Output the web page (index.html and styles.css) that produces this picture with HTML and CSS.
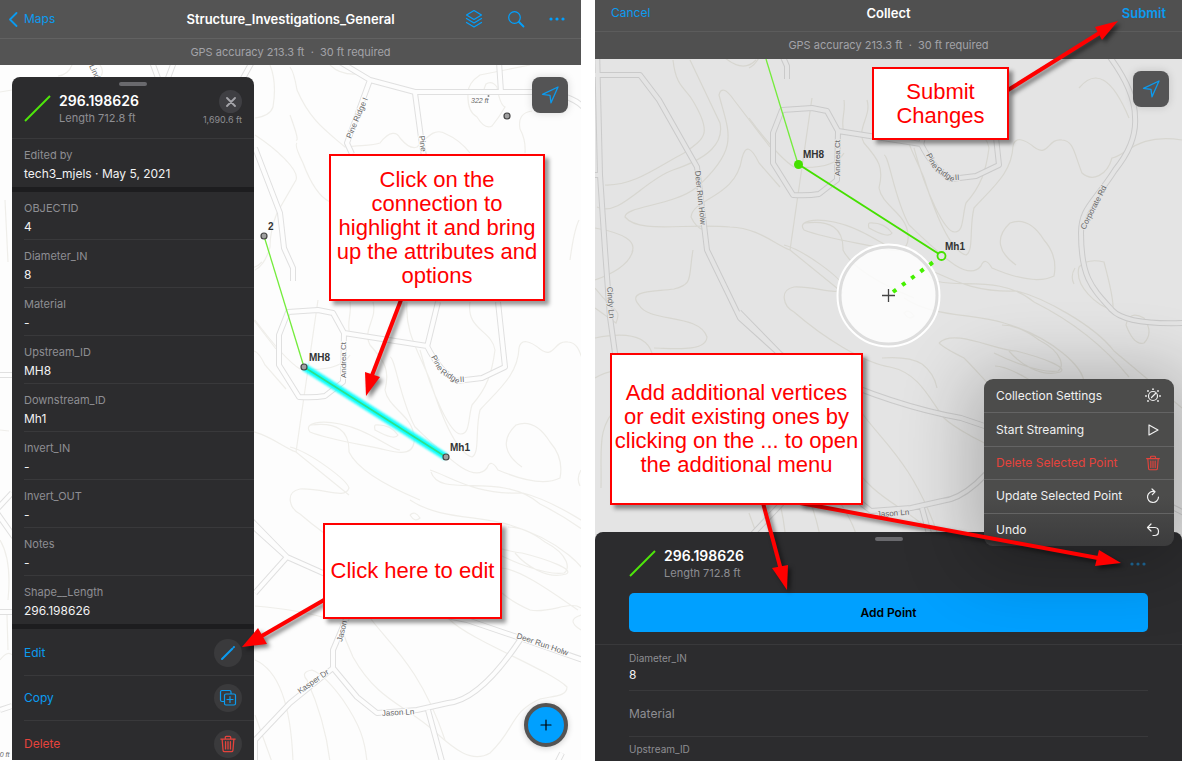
FILE: index.html
```html
<!DOCTYPE html>
<html lang="en">
<head>
<meta charset="utf-8">
<meta name="viewport" content="width=device-width, initial-scale=1">
<title>Editing a connection</title>
<link rel="stylesheet" href="styles.css">
</head>
<body>
<svg class="defs" width="0" height="0" aria-hidden="true">
  <defs>
    <g id="contours">
      <path d="M270 65C276 80 275 95 273 107Q270 116 255 118M255 135C275 148 300 170 296 180L277 213Q270 230 270 247Q265 265 255 270M290 67Q294 72 297 90C310 120 325 130 345 147C360 145 373 146 380 143C390 130 397 132 400 138Q410 150 417 147C430 134 436 128 446 134Q460 140 470 153M290 115Q300 142 296 140M297 143Q294 145 303 163Q315 195 330 202"/>
      <path d="M468 93Q467 112 477 117Q485 130 492 126Q500 116 505 107Q500 105 497 87Q492 80 486 84Q484 88 484 91M525 153Q526 140 520 129Q517 113 532 111M330 65Q340 75 357 74M468 93Q468 83 480 75L530 65M0 92L12 90M72 65Q68 75 58 76M100 65Q105 72 100 77M570 260Q574 230 579 220"/>
      <path d="M350 302C352 315 346 322 350 335M373 302C378 318 362 330 370 345C385 362 390 370 385 390C388 408 412 415 414 436C416 455 402 454 386 450C365 445 330 440 310 432C303 423 320 420 340 424C370 430 392 450 400 450M375 425Q390 424 398 435Q395 441 375 430Q374 427 375 425M255 320Q285 360 300 369Q340 372 350 355"/>
      <path d="M407 302C405 330 415 345 430 380C440 412 455 452 472 457C480 453 475 430 480 410C498 390 518 375 519 348C521 338 530 341 540 349C555 360 553 340 568 342C580 343 580 355 588 375C598 384 613 378 618 360C632 358 642 335 688 342M470 302C466 330 492 330 495 350C492 373 487 388 472 405C468 418 470 434 461 434C451 435 432 395 420 350M390 357C395 357 400 400 415 427C450 460 474 484 487 468Q491 458 498 470Q540 488 560 478Q564 458 550 442Q535 418 516 425C500 440 505 455 522 467"/>
      <path d="M581 470Q576 478 580 486M585 469Q593 460 610 464C614 480 620 500 619 512C603 508 580 488 585 469M632 527Q635 512 650 520Q660 535 650 545Q640 548 632 527M620 372L640 345M431 472C440 500 500 470 540 504C570 519 605 542 635 579M430 470C450 476 473 495 523 493C550 500 600 527 620 553L688 610"/>
      <path d="M290 447C310 452 347 480 349 488C345 500 325 488 300 489C285 492 289 508 300 514C330 540 370 565 396 569C425 575 435 600 450 620C470 640 550 670 567 687C567 697 552 696 540 699C510 712 515 730 490 753C470 765 450 745 434 731C405 705 377 700 353 657Q345 640 340 623M388 560Q415 558 428 566Q440 575 443 590"/>
      <path d="M445 545C460 530 500 552 522 553C550 560 575 570 566 574C547 580 525 565 515 553M501 568C520 568 560 598 578 610M445 545Q450 550 470 560C495 585 500 597 530 610C550 614 570 600 581 608M410 515Q415 510 420 518Q415 523 410 515M508 527Q525 527 545 542C570 555 570 570 564 573C545 576 510 560 500 555M581 615Q565 620 581 630M410 500C440 520 480 515 510 525C560 540 590 570 590 585M255 606Q300 610 325 618M255 660Q290 675 293 762M307 680Q300 672 312 670Q325 675 343 700C360 725 365 740 367 762M307 680Q325 720 330 762M255 715L272 762"/>
      <path d="M179 262C182 290 192 290 199 303C218 335 212 340 190 355C163 369 140 388 111 387M196 262L226 325C230 345 215 360 179 372C150 382 125 420 103 409M276 349L240 302Q228 285 225 297C235 335 246 350 203 389C180 408 131 408 131 419C145 436 190 425 236 429C265 430 280 446 296 452L349 495M286 389L265 365Q253 340 248 360C242 400 199 400 197 419Q202 430 210 432M231 260Q250 275 262 262"/>
      <path d="M139 452Q135 470 101 482M199 452C194 480 200 486 180 491C160 494 132 492 145 507C155 525 205 515 213 539C212 555 175 550 160 550M101 540Q150 530 158 555M101 490C120 515 128 510 122 525L101 510M101 580Q118 570 125 575M107 690C108 650 102 630 125 607M101 430Q145 438 138 454M368 615C385 640 420 665 445 740M318 300L296 452M311 425Q350 420 349 452Q360 475 420 500M585 290Q610 260 635 320"/>
      <path d="M5 200L8 262M0 430L9 431M0 540Q12 560 8 600M0 660Q8 650 12 655M7 615L8 650"/>
    </g>
    <g id="road-lines">
      <path d="M340 62L370 80L415 92L500 92H533Q570 93 583 107M499 62L501 92M370 80L347 143L352 154M427 347L438 302M415 93L422 145L424 156M498 302L505 367L482 378L457 381Q440 372 427 346L344 333L333 313L318 310L288 312L279 335V365L299 397Q314 398 325 396L343 382L344 333"/>
      <path d="M255 148L280 213L284 248L293 268V281M152 62L158 78M174 62L168 78M252 62L242 80"/>
      <path d="M90 277H146L165 302L203 369Q209 420 213 452L246 520L287 557L323 573Q400 608 467 620L520 638L583 660L690 715M245 514L287 557L255 593M520 640Q480 700 448 703L417 710L377 713L357 697L333 668V650L347 617V598M333 668L290 703L255 740V765M428 710L443 765"/>
      <path d="M103 250L106 377L111 452L116 519L121 555L140 610M90 377H106M609 250Q641 290 641 319Q643 345 621 372C600 405 587 410 587 435C587 480 598 490 618 512Q632 527 690 525"/>
      <path d="M0 375H12M-2 508L12 493M-3 513L14 537M0 612H12M0 710L12 706M556 765L562 753"/>
    </g>
    <g id="basemap">
      <use href="#contours" class="contour"/>
      <use href="#road-lines" class="road-case"/>
      <use href="#road-lines" class="road-fill"/>
    </g>
    <symbol id="i-locate" viewBox="0 0 20 20"><path d="M18 2L2.500 9.300L10 10.300L11 17.800Z" fill="none" stroke="currentColor" stroke-width="1.300" stroke-linejoin="round"/></symbol>
    <symbol id="i-trash" viewBox="0 0 20 20"><path d="M2 4.500H18M7 4V2.500Q7 1.500 8 1.500H12Q13 1.500 13 2.500V4M3.500 5L4.500 17Q4.700 18.500 6 18.500H14Q15.300 18.500 15.500 17L16.500 5M7.300 7.500V15.500M10 7.500V15.500M12.700 7.500V15.500" fill="none" stroke="currentColor" stroke-width="1.400" stroke-linecap="round"/></symbol>
    <symbol id="i-dots" viewBox="0 0 16 4"><circle cx="2" cy="2" r="1.600"/><circle cx="8" cy="2" r="1.600"/><circle cx="14" cy="2" r="1.600"/></symbol>
  </defs>
</svg>

<main class="page">
  <section class="screen screen-view">
    <header class="nav">
      <button class="nav-link back" type="button"><svg width="10" height="16" viewBox="0 0 10 16"><path d="M8.500 2L2 8.500L8.500 15" class="stroke-2"/></svg>Maps</button>
      <h1>Structure_Investigations_General</h1>
      <div class="nav-actions">
        <button type="button" aria-label="Layers"><svg width="18" height="20" viewBox="0 0 18 20"><path d="M9 1.500L16.500 6L9 10.500L1.500 6ZM1.500 9.500L9 14L16.500 9.500M1.500 13.500L9 18L16.500 13.500" class="stroke-1"/></svg></button>
        <button type="button" aria-label="Search"><svg width="18" height="18" viewBox="0 0 18 18"><circle cx="7.500" cy="7.500" r="5.800" class="stroke-1"/><path d="M12 12L16.500 16.500" class="stroke-2"/></svg></button>
        <button type="button" aria-label="More"><svg width="16" height="4"><use href="#i-dots"/></svg></button>
      </div>
    </header>
    <p class="gps">GPS accuracy 213.3 ft &nbsp;·&nbsp; 30 ft required</p>
    <div class="stage">
      <svg class="map" viewBox="0 65 581 695" preserveAspectRatio="xMinYMin slice">
        <defs>
          <filter id="soft" x="-10%" y="-10%" width="120%" height="120%"><feGaussianBlur stdDeviation="1"/></filter>
        </defs>
        <use href="#basemap"/>
        <g class="street">
          <text transform="translate(351 139) rotate(-67)">Pine Ridge I</text>
          <text transform="translate(419 136) rotate(83)">Pine</text>
          <text transform="translate(346 378) rotate(-90)">Andrea Ct</text>
          <text transform="translate(431 357) rotate(62)">Pine</text>
          <text transform="translate(440 373) rotate(32)">Ridge</text>
          <text transform="translate(460 382) rotate(-3)">II</text>
          <text transform="translate(342 642) rotate(-76)">Jason Ln</text>
          <text transform="translate(300 694) rotate(-35)">Kasper Dr</text>
          <text transform="translate(382 716) rotate(-3)">Jason Ln</text>
          <text transform="translate(516 638) rotate(19)">Deer Run Holw</text>
          <text transform="translate(89 66) rotate(65)">Lindy</text>
          <text class="spot" x="471" y="103">322 ft</text>
          <text class="spot" x="-8" y="757">400 ft</text>
        </g>
        <circle cx="488.500" cy="96" r="1" fill="#888"/>
        <path class="pipe" d="M264 236L304 367"/>
        <path d="M304 367L446 457" stroke="#1ff" stroke-width="7" filter="url(#soft)"/>
        <path d="M304 367L446 457" stroke="#2ee08a" stroke-width="1.500"/>
        <g class="node"><circle cx="264" cy="236" r="3"/><circle cx="304" cy="367" r="3"/><circle cx="446" cy="457" r="3"/><circle cx="507" cy="116" r="3"/></g>
        <g class="node-name"><text x="268" y="230">2</text><text x="309" y="361">MH8</text><text x="450" y="451">Mh1</text></g>
      </svg>

      <article class="panel">
        <span class="handle"></span>
        <header class="feature">
          <svg width="27" height="27" viewBox="0 0 27 27"><path d="M1 26L26 1" class="symbol-line"/></svg>
          <div class="feature-name"><h2>296.198626</h2><p>Length 712.8 ft</p></div>
          <div class="feature-side">
            <button class="close" type="button" aria-label="Close"><svg width="10" height="10" viewBox="0 0 10 10"><path d="M1 1L9 9M9 1L1 9" class="stroke-2"/></svg></button>
            <span>1,690.6 ft</span>
          </div>
        </header>
        <dl class="attrs">
          <div class="section-end"><dt>Edited by</dt><dd>tech3_mjels · May 5, 2021</dd></div>
          <div><dt>OBJECTID</dt><dd>4</dd></div>
          <div><dt>Diameter_IN</dt><dd>8</dd></div>
          <div><dt>Material</dt><dd>-</dd></div>
          <div><dt>Upstream_ID</dt><dd>MH8</dd></div>
          <div><dt>Downstream_ID</dt><dd>Mh1</dd></div>
          <div><dt>Invert_IN</dt><dd>-</dd></div>
          <div><dt>Invert_OUT</dt><dd>-</dd></div>
          <div><dt>Notes</dt><dd>-</dd></div>
          <div class="section-end"><dt>Shape__Length</dt><dd>296.198626</dd></div>
        </dl>
        <div class="actions">
          <button type="button">Edit<span class="disc"><svg width="16" height="16" viewBox="0 0 16 16"><path d="M2 14L12.300 3.700M13.600 2.400L14 2" stroke="currentColor" stroke-width="2" stroke-linecap="round"/></svg></span></button>
          <button type="button">Copy<span class="disc"><svg width="18" height="18" viewBox="0 0 18 18"><path d="M5.500 12.500H3Q1.500 12.500 1.500 11V3Q1.500 1.500 3 1.500H10.500Q12 1.500 12 3V5M7 5H15Q16.500 5 16.500 6.500V14.500Q16.500 16 15 16H7Q5.500 16 5.500 14.500V6.500Q5.500 5 7 5ZM11 7.500V13.500M8 10.500H14" class="stroke-1"/></svg></span></button>
          <button class="danger" type="button">Delete<span class="disc"><svg width="18" height="20"><use href="#i-trash"/></svg></span></button>
        </div>
      </article>
      <button class="locate" type="button" aria-label="My location"><svg width="20" height="20"><use href="#i-locate"/></svg></button>
      <button class="fab" type="button" aria-label="Add feature"><svg width="12" height="12" viewBox="0 0 12 12"><path d="M6 1V11M1 6H11" class="stroke-1"/></svg></button>
    </div>
  </section>

  <section class="screen screen-collect">
    <header class="nav">
      <button class="nav-link" type="button">Cancel</button>
      <h1>Collect</h1>
      <button class="nav-link submit" type="button">Submit</button>
    </header>
    <p class="gps">GPS accuracy 213.3 ft &nbsp;·&nbsp; 30 ft required</p>
    <div class="stage">
      <svg class="map map-dim" viewBox="595 59 587 702" preserveAspectRatio="xMinYMin slice">
        <use href="#basemap" transform="translate(494 -202)"/>
        <g class="street">
          <text transform="translate(840 176) rotate(-90)">Andrea Ct</text>
          <text transform="translate(926 155) rotate(62)">Pine</text>
          <text transform="translate(935 171) rotate(32)">Ridge</text>
          <text transform="translate(955 180) rotate(-3)">II</text>
          <text transform="translate(1085 230) rotate(-63)">Corporate Rd</text>
          <text transform="translate(695 171) rotate(84)">Deer Run Holw</text>
          <text transform="translate(607 287) rotate(86)">Cindy Ln</text>
          <text transform="translate(877 517) rotate(-4)">Jason Ln</text>
        </g>
        <path class="pipe" d="M766 59L798 164"/>
        <circle cx="888.500" cy="295.500" r="49" fill="#fff" fill-opacity=".84" stroke="#ddd" stroke-width="4"/>
        <circle cx="888.500" cy="295.500" r="51" fill="none" stroke="#fff" stroke-width="2"/>
        <path d="M798 164L939 254" stroke="#45e000" stroke-width="2"/>
        <path d="M893 292L936 260" stroke="#45f000" stroke-width="4" stroke-dasharray="4 7.400"/>
        <circle cx="798.500" cy="164.500" r="4.500" fill="#45e000"/>
        <circle cx="941.500" cy="256" r="4" fill="#e4e4e4" stroke="#45e000" stroke-width="1.800"/>
        <path d="M882 295.500H895M888.500 289V302" stroke="#444" stroke-width="1.300"/>
        <g class="node-name"><text x="803" y="158">MH8</text><text x="945" y="250">Mh1</text></g>
      </svg>
      <button class="locate" type="button" aria-label="My location"><svg width="20" height="20"><use href="#i-locate"/></svg></button>

      <form class="sheet">
        <span class="handle"></span>
        <header class="feature">
          <svg width="27" height="27" viewBox="0 0 27 27"><path d="M1 26L26 1" class="symbol-line"/></svg>
          <div class="feature-name"><h2>296.198626</h2><p>Length 712.8 ft</p></div>
          <button class="sheet-more" type="button" aria-label="More options"><svg width="16" height="4"><use href="#i-dots"/></svg></button>
        </header>
        <button class="add" type="button">Add Point</button>
        <div class="fields">
          <div class="field"><label for="diameter">Diameter_IN</label><input id="diameter" value="8"></div>
          <div class="field"><input id="material" aria-label="Material" placeholder="Material"></div>
          <div class="field"><label for="upstream">Upstream_ID</label></div>
          <input id="upstream">
        </div>
      </form>

      <div class="menu" role="menu">
        <button role="menuitem" type="button">Collection Settings<svg width="16" height="16" viewBox="0 0 16 16"><circle cx="8" cy="8" r="4.500" class="stroke-1"/><path d="M6.500 9.500L10.500 5.500" class="stroke-1"/><g fill="currentColor"><circle cx="8" cy="1.200" r=".9"/><circle cx="13" cy="3" r=".9"/><circle cx="15" cy="8" r=".9"/><circle cx="13" cy="13" r=".9"/><circle cx="3" cy="3" r=".9"/><circle cx="1" cy="8" r=".9"/><circle cx="3" cy="13" r=".9"/></g></svg></button>
        <button role="menuitem" type="button">Start Streaming<svg width="16" height="16" viewBox="0 0 16 16"><path d="M4 3V13L13 8Z" class="stroke-1"/></svg></button>
        <button class="danger" role="menuitem" type="button">Delete Selected Point<svg width="16" height="16"><use href="#i-trash"/></svg></button>
        <button role="menuitem" type="button">Update Selected Point<svg width="16" height="16" viewBox="0 0 16 16"><path d="M13.500 9A5.500 5.500 0 1 1 9.500 3.700M7 1L10 3.800L7.300 6.600" class="stroke-1"/></svg></button>
        <button role="menuitem" type="button">Undo<svg width="16" height="16" viewBox="0 0 16 16"><path d="M6 2L2.500 5.500L6 9M2.500 5.500H10Q13.500 5.800 13.500 9.500Q13.500 13.500 9.500 13.500H8" class="stroke-1"/></svg></button>
      </div>
    </div>
  </section>

  <svg class="arrows" viewBox="0 0 1182 762" preserveAspectRatio="xMinYMin meet" aria-hidden="true">
    <path d="M401 300L371 378" /><polygon points="366,396 365,372 380,377"/>
    <path d="M324 600L260 637" /><polygon points="242,647 258,628 267,644"/>
    <path d="M1008 90L1101 32" /><polygon points="1118,21 1095,27 1102,40"/>
    <path d="M763 503L781 570" /><polygon points="787,590 772,568 788,565"/>
    <path d="M800 503L1098 558" /><polygon points="1121,563 1099,550 1095,566"/>
  </svg>
  <p class="callout callout-connection">Click on the<br>connection to<br>highlight it and bring<br>up the attributes and<br>options</p>
  <p class="callout callout-edit">Click here to edit</p>
  <p class="callout callout-submit">Submit<br>Changes</p>
  <p class="callout callout-vertices">Add additional vertices<br>or edit existing ones by<br>clicking on the ... to open<br>the additional menu</p>
</main>
</body>
</html>
```
FILE: styles.css
```css
* { box-sizing: border-box; }
body, h1, h2, p, dl, dd { margin: 0; }
body { background: #fff; font-family: Inter, "Liberation Sans", sans-serif; font-size: 12px; line-height: 16px; color: #f2f2f3; }
button, input { font: inherit; color: inherit; background: none; border: 0; padding: 0; margin: 0; }
button { cursor: pointer; }
svg { display: block; fill: none; flex: none; }
.defs { position: absolute; }
.stroke-1 { fill: none; stroke: currentColor; stroke-width: 1.2; stroke-linecap: round; stroke-linejoin: round; }
.stroke-2 { fill: none; stroke: currentColor; stroke-width: 1.8; stroke-linecap: round; stroke-linejoin: round; }

.page { position: relative; display: grid; grid-template-columns: 581fr 587fr; grid-template-rows: minmax(0, 1fr); gap: 14px; height: 100vh; min-height: 760px; overflow: hidden; }
.screen { display: flex; flex-direction: column; min-width: 0; min-height: 0; }
.screen-view { margin-bottom: 2px; }
.screen-collect { margin-bottom: 1px; }

/* Top bars */
.nav { display: grid; grid-template-columns: 1fr auto 1fr; align-items: center; flex: none; height: 39px; padding: 0 16px 0 8px; background: #545454; border-bottom: 1px solid #626262; color: #00a0ff; }
.nav h1 { font-size: 13px; line-height: 16px; font-weight: 600; color: #fff; }
.nav-link { justify-self: start; color: #0b9bf0; }
.back { display: flex; align-items: center; gap: 6px; }
.nav-actions { display: flex; align-items: center; justify-content: flex-end; gap: 24px; }
.nav-actions svg, .sheet-more svg { fill: currentColor; }
.screen-view h1 { margin-left: 8px; }
.screen-collect .nav { height: 32px; padding: 0 16px 6px; background: #505050; border-color: #5c5c5c; }
.submit { justify-self: end; font-size: 13px; font-weight: 600; }
.gps { flex: none; height: 26px; line-height: 26px; text-align: center; font-size: 11px; color: #a3a3a8; background: #545454; }
.screen-collect .gps { height: 27px; line-height: 27px; background: #505050; }

/* Map */
.stage { position: relative; flex: 1; min-height: 0; display: flex; flex-direction: column; overflow: hidden; }
.map { --land: #fdfdfd; --case: #e0e0e0; --line: #efeeea; position: absolute; inset: 0; width: 100%; height: 100%; background: var(--land); }
.map-dim { --land: #e4e4e4; --case: #cacaca; --line: #d7d6d0; }
.contour { stroke: var(--line); stroke-width: 1.2; }
.road-case { stroke: var(--case); stroke-width: 6; stroke-linejoin: round; }
.road-fill { stroke: var(--land); stroke-width: 4; stroke-linejoin: round; }
.street { font: 8px "Liberation Sans", Arial, sans-serif; fill: #666; stroke: var(--land); stroke-width: 2px; paint-order: stroke; }
.spot { font-size: 7px; font-style: italic; }
.pipe { stroke: #74ec3c; stroke-width: 1.3; }
.node { fill: #a0a0a0; stroke: #444; stroke-width: 1.2; }
.node-name { font: bold 10px "Liberation Sans", Arial, sans-serif; fill: #333; }
.locate { position: absolute; top: 12px; right: 13px; display: grid; place-items: center; width: 36px; height: 36px; border-radius: 8px; background: #545455; color: #0b9bf0; box-shadow: 0 0 8px rgb(0 0 0 / .15); }
.fab { position: absolute; right: 13px; bottom: 13px; display: grid; place-items: center; width: 44px; height: 44px; border: 4px solid #545454; border-radius: 50%; background: #00a0ff; color: #000; box-shadow: 0 1px 6px rgb(0 0 0 / .2); }

/* Feature details */
.panel { position: relative; display: flex; flex-direction: column; flex: 1; min-height: 0; width: 242px; margin: 12px 0 0 12px; overflow: hidden; border-radius: 8px 8px 0 0; background: #2c2c2e; }
.panel > * { flex: none; }
.handle { display: block; width: 28px; height: 4px; margin: 5px auto 0; border-radius: 2px; background: #69696d; }
.feature { display: flex; align-items: center; gap: 8px; color: #8e8e93; }
.panel .feature { height: 53px; padding: 0 12px 7px; border-bottom: 1px solid #39393b; }
.feature h2 { font-size: 14px; line-height: 18px; font-weight: 600; color: #fff; }
.feature p { font-size: 11px; line-height: 16px; }
.feature-name { flex: 1; }
.feature-side { display: flex; flex-direction: column; align-items: flex-end; font-size: 9px; line-height: 14px; }
.close { display: grid; place-items: center; width: 23px; height: 23px; border-radius: 50%; background: #3f3f43; color: #a5a5aa; }
.symbol-line { stroke: #4ee60a; stroke-width: 2; }
.attrs > div { height: 48px; margin-left: 12px; padding-top: 8px; border-bottom: 1px solid #39393b; }
.attrs > .section-end { height: 53px; margin-left: 0; padding-left: 12px; border-bottom: 5px solid #1d1d1f; }
.attrs dt { font-size: 11px; color: #8e8e93; }
.attrs dd { margin-top: 3px; }
.actions { display: flex; flex-direction: column; padding: 2px 0 0 12px; }
.actions button { display: flex; align-items: center; justify-content: space-between; height: 45px; padding-right: 12px; border-bottom: 1px solid #39393b; color: #0b9bf0; }
.actions .danger { border-bottom: 0; }
.danger, .actions .danger, .menu .danger { color: #e5433c; }
.disc { display: grid; place-items: center; width: 28px; height: 28px; border-radius: 50%; background: #3a3a3c; }

/* Collection sheet */
.sheet { position: relative; flex: none; height: 229px; margin-top: auto; overflow: hidden; border-radius: 8px 8px 0 0; background: #2c2c2e; }
.sheet .feature { height: 52px; padding: 0 36px 7px 34px; }
.sheet-more { color: #1f6a9a; }
.add { display: block; width: calc(100% - 68px); height: 39px; margin: 0 34px; border-radius: 5px; background: #00a0ff; color: #000; font-size: 12px; font-weight: 600; }
.fields { margin-top: 12px; padding: 0 34px; border-top: 1px solid #39393b; }
.field { display: flex; flex-direction: column; justify-content: center; height: 46px; border-bottom: 1px solid #39393b; }
.field label { font-size: 10px; line-height: 14px; color: #8e8e93; }
.field input { width: 100%; height: 20px; outline: 0; }
.field input::placeholder { color: #8e8e93; opacity: 1; }
.field:nth-child(3) { height: 24px; border: 0; }

/* Pop-up menu */
.menu { position: absolute; right: 8px; top: 320px; width: 190px; height: 167px; display: grid; grid-auto-rows: 1fr; overflow: hidden; border-radius: 9px; background: linear-gradient(#4c4c4b 70%, #3c3c3d); box-shadow: 0 8px 70px 14px rgb(0 0 0 / .24); }
.menu button { display: flex; align-items: center; justify-content: space-between; padding: 0 13px 0 12px; color: #f0f0f0; }
.menu button + button { border-top: 1px solid #646464; }

/* Annotations */
.arrows { position: absolute; inset: 0; width: 100%; height: 100%; pointer-events: none; stroke: #f00; stroke-width: 4; fill: none; filter: drop-shadow(3px 3px 2px rgb(0 0 0 / .5)); }
.arrows polygon { fill: #f00; stroke: none; }
.callout { position: absolute; display: flex; align-items: center; justify-content: center; border: 2px solid #f00; background: #fff; color: #f00; font: 22px/24px "Liberation Sans", Arial, sans-serif; text-align: center; box-shadow: 4px 4px 4px rgb(0 0 0 / .4); }
.callout { display: grid; align-content: center; }
.callout-connection { left: 329px; top: 154px; width: 216px; height: 147px; }
.callout-edit { left: 323px; top: 523px; width: 179px; height: 96px; }
.callout-submit { left: 872px; top: 67px; width: 137px; height: 73px; }
.callout-vertices { left: 610px; top: 353px; width: 253px; height: 152px; }
```
